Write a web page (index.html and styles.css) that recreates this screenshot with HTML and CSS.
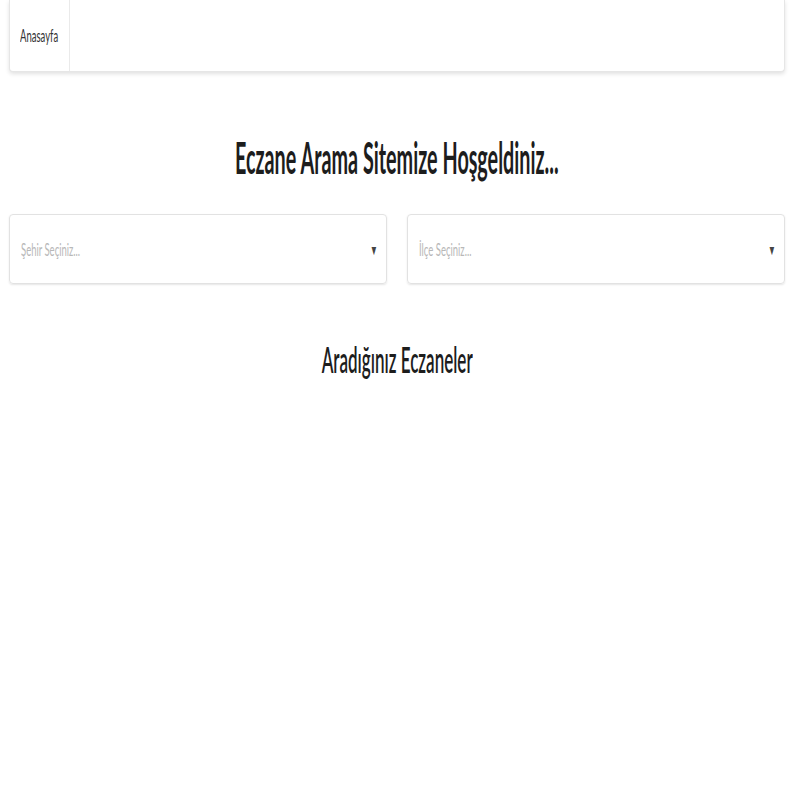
FILE: index.html
```html
<!DOCTYPE html>
<html lang="tr">
<head>
<meta charset="utf-8">
<title>Eczane Arama</title>
<link rel="stylesheet" href="styles.css">
</head>
<body>
<nav class="navbar">
  <a class="nav-item" href="#"><span class="sq sq-left">Anasayfa</span></a>
</nav>
<main class="content">
  <h1 class="title"><span class="sq sq-head">Eczane Arama Sitemize Hoşgeldiniz...</span></h1>
  <div class="selects">
    <div class="select">
      <span class="sq sq-left placeholder">Şehir Seçiniz...</span>
      <span class="sq arrow">▼</span>
    </div>
    <div class="select">
      <span class="sq sq-left placeholder">İlçe Seçiniz...</span>
      <span class="sq arrow">▼</span>
    </div>
  </div>
  <h2 class="subtitle"><span class="sq sq-head">Aradığınız Eczaneler</span></h2>
</main>
</body>
</html>
```

FILE: styles.css
```css
html, body {
  margin: 0;
  padding: 0;
  background: #fff;
}
body {
  padding: 0 15px 0 9px;
  font-family: "Lato", "Noto Sans", sans-serif;
  color: #222;
}
.sq {
  display: inline-block;
  transform: scaleX(0.56);
  transform-origin: center center;
  white-space: nowrap;
}
.sq-left {
  transform-origin: left center;
}
.sq-head {
  transform: scaleX(0.46);
}
.navbar {
  display: flex;
  height: 72px;
  background: #fff;
  border: 1px solid #e6e6e6;
  border-top: none;
  border-radius: 0 0 4px 4px;
  box-shadow: 0 2px 4px rgba(0, 0, 0, 0.12);
  box-sizing: border-box;
}
.nav-item {
  width: 60px;
  box-sizing: border-box;
  border-right: 1px solid #eaeaea;
  display: flex;
  align-items: center;
  padding-left: 10px;
  text-decoration: none;
  color: #333;
  font-size: 17px;
}
.content {
  display: flex;
  flex-direction: column;
}
.title {
  margin: 64px 0 0;
  text-align: center;
  font-size: 43px;
  line-height: 44px;
  font-weight: 700;
  color: #1d1d1d;
}
.selects {
  display: flex;
  gap: 20px;
  margin-top: 34px;
}
.select {
  flex: 1;
  height: 70px;
  box-sizing: border-box;
  border: 1px solid #e2e2e2;
  border-radius: 4px;
  box-shadow: 0 1px 2px rgba(0, 0, 0, 0.1);
  display: flex;
  align-items: center;
  justify-content: space-between;
  padding: 0 5px 0 11px;
}
.placeholder {
  color: #b8b8b8;
  font-size: 17px;
}
.arrow {
  font-size: 14px;
  color: #444;
}
.subtitle {
  margin: 55px 0 0;
  text-align: center;
  font-size: 37px;
  line-height: 40px;
  font-weight: 600;
  color: #1d1d1d;
}
```
